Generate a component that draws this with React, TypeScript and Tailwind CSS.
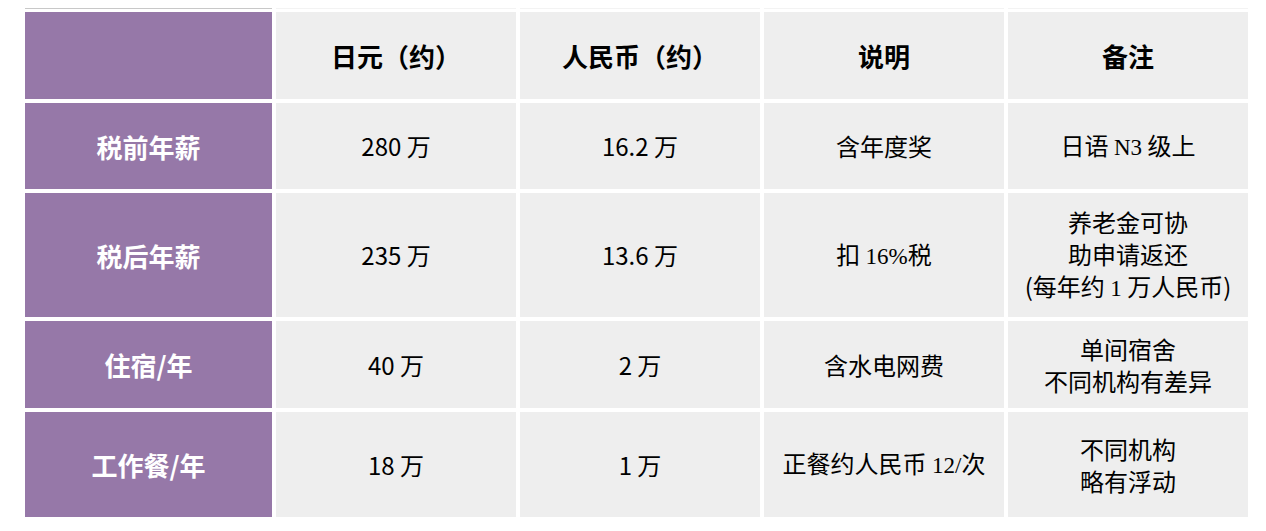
import type { ReactNode } from 'react';

const sans = 'font-["Noto_Sans_CJK_SC","Noto_Sans",sans-serif]';
const serif = 'font-["Liberation_Serif","Noto_Serif",serif]';

// 数字部分用衬线体，和原图的混排保持一致
function Num({ children }: { children: ReactNode }) {
  return <span className={`${serif} text-[23px]`}>{children}</span>;
}

interface Row {
  label: string;
  yen: string;
  rmb: string;
  note: ReactNode;
  remark: ReactNode;
}

const rows: Row[] = [
  {
    label: '税前年薪',
    yen: '280 万',
    rmb: '16.2 万',
    note: '含年度奖',
    remark: (
      <>
        日语 <Num>N3</Num> 级上
      </>
    ),
  },
  {
    label: '税后年薪',
    yen: '235 万',
    rmb: '13.6 万',
    note: (
      <>
        扣 <Num>16%</Num>税
      </>
    ),
    remark: (
      <>
        养老金可协
        <br />
        助申请返还
        <br />
        (每年约 <Num>1</Num> 万人民币)
      </>
    ),
  },
  {
    label: '住宿/年',
    yen: '40 万',
    rmb: '2 万',
    note: '含水电网费',
    remark: (
      <>
        单间宿舍
        <br />
        不同机构有差异
      </>
    ),
  },
  {
    label: '工作餐/年',
    yen: '18 万',
    rmb: '1 万',
    note: (
      <>
        正餐约人民币 <Num>12/</Num>次
      </>
    ),
    remark: (
      <>
        不同机构
        <br />
        略有浮动
      </>
    ),
  },
];

const headers = ['日元（约）', '人民币（约）', '说明', '备注'];

const cell = 'bg-[#eeeeee] flex items-center justify-center text-center text-[24px] leading-[32px] text-black';
const side = 'bg-[#9678a8] flex items-center justify-center text-white font-bold text-[26px]';

export default function App() {
  return (
    <div className={`${sans} bg-white w-[1266px] h-[531px] pt-[8px] pl-[25px]`}>
      {/* 表格顶部细线 */}
      <div className="grid grid-cols-[247px_repeat(4,1fr)] gap-x-[4px] w-[1223px]">
        <div className="h-px bg-[#c8c8c8]" />
        <div className="h-px bg-[#f3f3f3]" />
        <div className="h-px bg-[#f3f3f3]" />
        <div className="h-px bg-[#f3f3f3]" />
        <div className="h-px bg-[#f3f3f3]" />
      </div>
      <div className="mt-[3px] grid grid-cols-[247px_repeat(4,1fr)] grid-rows-[87px_86px_124px_87px_105px] gap-[4px] w-[1223px]">
        <div className={side} />
        {headers.map((h) => (
          <div key={h} className={`${cell} font-bold text-[26px]`}>
            {h}
          </div>
        ))}
        {rows.map((r) => (
          <div key={r.label} className="contents">
            <div className={side}>{r.label}</div>
            <div className={cell}>{r.yen}</div>
            <div className={cell}>{r.rmb}</div>
            <div className={cell}>
              <div>{r.note}</div>
            </div>
            <div className={cell}>
              <div>{r.remark}</div>
            </div>
          </div>
        ))}
      </div>
    </div>
  );
}
